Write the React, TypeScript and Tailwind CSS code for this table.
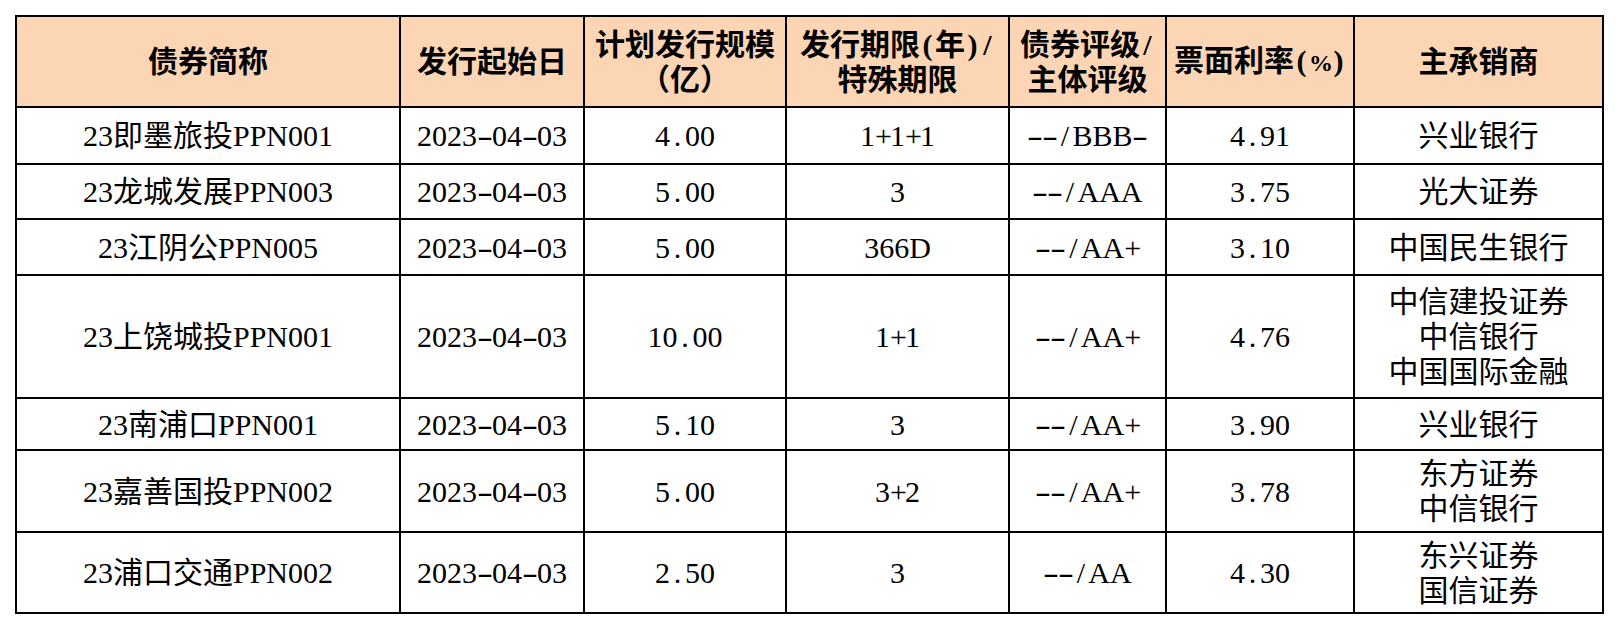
import React from "react";

type Bond = {
  name: string;
  date: string;
  size: string;
  term: string;
  rating: string;
  coupon: string;
  underwriters: string[];
  h: string;
};

const bonds: Bond[] = [
  { name: "23即墨旅投PPN001", date: "2023-04-03", size: "4.00", term: "1+1+1", rating: "--/BBB-", coupon: "4.91", underwriters: ["兴业银行"], h: "h-[57px]" },
  { name: "23龙城发展PPN003", date: "2023-04-03", size: "5.00", term: "3", rating: "--/AAA", coupon: "3.75", underwriters: ["光大证券"], h: "h-[55px]" },
  { name: "23江阴公PPN005", date: "2023-04-03", size: "5.00", term: "366D", rating: "--/AA+", coupon: "3.10", underwriters: ["中国民生银行"], h: "h-[56px]" },
  { name: "23上饶城投PPN001", date: "2023-04-03", size: "10.00", term: "1+1", rating: "--/AA+", coupon: "4.76", underwriters: ["中信建投证券", "中信银行", "中国国际金融"], h: "h-[123px]" },
  { name: "23南浦口PPN001", date: "2023-04-03", size: "5.10", term: "3", rating: "--/AA+", coupon: "3.90", underwriters: ["兴业银行"], h: "h-[52px]" },
  { name: "23嘉善国投PPN002", date: "2023-04-03", size: "5.00", term: "3+2", rating: "--/AA+", coupon: "3.78", underwriters: ["东方证券", "中信银行"], h: "h-[82px]" },
  { name: "23浦口交通PPN002", date: "2023-04-03", size: "2.50", term: "3", rating: "--/AA", coupon: "4.30", underwriters: ["东兴证券", "国信证券"], h: "h-[81px]" },
];

const headers: string[][] = [
  ["债券简称"],
  ["发行起始日"],
  ["计划发行规模", "（亿）"],
  ["发行期限(年)/", "特殊期限"],
  ["债券评级/", "主体评级"],
  ["票面利率(%)"],
  ["主承销商"],
];

const widths = ["w-[384px]", "w-[184px]", "w-[202px]", "w-[223px]", "w-[157px]", "w-[188px]", "w-[249px]"];

const cell = "border-2 border-black p-0 text-center align-middle whitespace-nowrap";

// half-width punctuation gets a fixed 15px slot, like the original's fixed-pitch font
const Txt = ({ text }: { text: string }) => (
  <>
    {Array.from(text).map((ch, i) =>
      "-./+()".includes(ch) ? (
        <span key={i} className="inline-block w-[15px] text-center">
          <span className={ch === "-" ? "inline-block scale-x-[1.6]" : "inline-block"}>{ch}</span>
        </span>
      ) : ch === "%" ? (
        <span key={i} className="inline-block w-[22px] text-center text-[24px]">
          {ch}
        </span>
      ) : (
        ch
      )
    )}
  </>
);

export default function App() {
  return (
    <div className="bg-white w-[1620px] h-[630px] pl-[15px] pt-[15px]">
      <table
        className="border-collapse text-[30px] leading-[35px] text-black"
        style={{ fontFamily: '"Liberation Serif", "Noto Sans CJK SC", serif' }}
      >
        <colgroup>
          {widths.map((w) => (
            <col key={w} className={w} />
          ))}
        </colgroup>
        <thead>
          <tr className="h-[91px] bg-[#fcd5b4]">
            {headers.map((lines, i) => (
              <th key={i} className={`${cell} font-bold`}>
                {lines.map((l) => (
                  <div key={l}>
                    <Txt text={l} />
                  </div>
                ))}
              </th>
            ))}
          </tr>
        </thead>
        <tbody>
          {bonds.map((b) => (
            <tr key={b.name} className={b.h}>
              <td className={cell}><Txt text={b.name} /></td>
              <td className={cell}><Txt text={b.date} /></td>
              <td className={cell}><Txt text={b.size} /></td>
              <td className={cell}><Txt text={b.term} /></td>
              <td className={cell}><Txt text={b.rating} /></td>
              <td className={cell}><Txt text={b.coupon} /></td>
              <td className={cell}>
                {b.underwriters.map((u) => (
                  <div key={u}>{u}</div>
                ))}
              </td>
            </tr>
          ))}
        </tbody>
      </table>
    </div>
  );
}
